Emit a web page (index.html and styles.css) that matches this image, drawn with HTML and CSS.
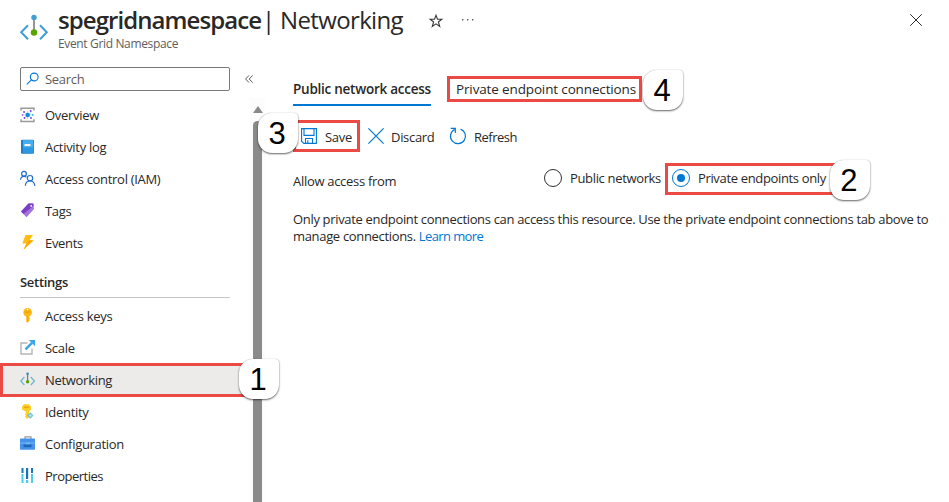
FILE: index.html
```html
<!DOCTYPE html>
<html lang="en">
<head>
<meta charset="utf-8">
<title>spegridnamespace | Networking</title>
<link rel="stylesheet" href="styles.css">
</head>
<body>
<div class="blade">
  <header class="header">
    <svg class="logo" width="28" height="28" viewBox="0 0 28 28" fill="none"><path d="M8 11.2 1.2 18.3 8 25.2M20 11.2l6.8 7.1-6.8 6.9" stroke="#3f9fd3" stroke-width="2"/><path d="M14 4v13" stroke="#8c8c8c" stroke-width="1.8"/><circle cx="14" cy="3.5" r="2.7" fill="#3f9fd3"/><circle cx="14" cy="18.5" r="3.2" fill="#57a300"/></svg>
    <div class="heading">
      <h1 class="title"><b class="name">spegridnamespace</b><span class="page">| Networking</span></h1>
      <div class="subtitle">Event Grid Namespace</div>
    </div>
    <svg class="star" width="14" height="14" viewBox="0 0 14 14" fill="none" stroke="#3b3a39" stroke-width="1.1"><path d="M7 1.2 8.5 5.2H12.8L9.4 8 10.7 12.5 7 9.9 3.3 12.5 4.6 8 1.2 5.2H5.5Z"/></svg>
    <svg class="more" width="12" height="4" viewBox="0 0 12 4" fill="#605e5c"><path d="M0 1h1.4v1.4H0zM5 1h1.4v1.4H5zM10 1h1.4v1.4H10z"/></svg>
    <svg class="close" width="12" height="12" viewBox="0 0 12 12" stroke="#323130" stroke-width="1"><path d="M.2.2l11.6 11.6M11.8.2.2 11.8"/></svg>
  </header>
  <div class="content">
    <aside class="sidebar">
      <div class="searchrow">
        <div class="search"><svg width="14" height="14" viewBox="0 0 14 14" fill="none" stroke="#0078d4" stroke-width="1.1"><circle cx="8.2" cy="5" r="3.9"/><path d="M5.4 7.8 .8 12.4"/></svg><span>Search</span></div>
        <svg class="collapse" width="8" height="8" viewBox="0 0 8 8" fill="none" stroke="#605e5c"><path d="M4 .4.6 4 4 7.6M7.6.4 4.2 4l3.4 3.6"/></svg>
      </div>
      <nav class="nav">
        <a class="item"><svg width="16" height="16" viewBox="0 0 16 16"><path d="M1 3.4V1.2h13v2.2M1 12.2v2.2h13v-2.2" fill="none" stroke="#999" stroke-width="1.5"/><path d="m4 5 7.5 6M11.5 5 4 11M2.5 8h11M7.7 4v8" stroke="#8fd3f2" stroke-width=".7"/><circle cx="7.7" cy="8" r="2.2" fill="#1688dc"/><g fill="#773adc"><circle cx="4" cy="5" r=".9"/><circle cx="10.7" cy="4" r=".9"/><circle cx="4.5" cy="11" r=".9"/><circle cx="11" cy="11" r=".9"/><circle cx="2.5" cy="8" r=".8"/></g><circle cx="12.8" cy="8" r=".9" fill="#32bedd"/></svg>Overview</a>
        <a class="item"><svg width="16" height="16" viewBox="0 0 16 16"><rect x="1" y="0.8" width="13" height="14" rx="1.2" fill="#1f7fc8"/><path d="M3 1.1h10.3v13H3z" fill="#46adee"/><path d="M3 8.3h10.3v5.8H3z" fill="#2c98e4"/><path d="M4.5 5.1h6v2h-6z" fill="#fff"/></svg>Activity log</a>
        <a class="item"><svg width="16" height="16" viewBox="0 0 16 16" fill="none" stroke="#1f6dd0" stroke-width="1.2"><circle cx="4" cy="2.7" r="2.4"/><path d="M.5 8.7c.3-2.5 1.8-3.3 3.5-3.3 1 0 1.7.2 2.4.7"/><circle cx="10" cy="7.2" r="2.7"/><path d="M5.3 14.8c.2-3.3 2.2-4.8 4.7-4.8s4.4 1.5 4.9 4.8"/></svg>Access control (IAM)</a>
        <a class="item"><svg width="16" height="16" viewBox="0 0 16 16"><path d="M8.5 .5h4.8l.7 5.5-7.5 8.2L1 8.5z" fill="#a575df"/><path d="M8.5 .5h4.8l.3 2.2L3.5 11 1 8.5z" fill="#7c3fc3"/><circle cx="11.2" cy="2.9" r=".9" fill="#fff"/></svg>Tags</a>
        <a class="item"><svg width="16" height="16" viewBox="0 0 16 16"><path d="M5.5 0H13L9.5 5.3h4L3.5 14.7 6.5 8.5H2.3z" fill="#ffbd14"/><path d="M9.5 5.3h4L3.5 14.7 6.5 8.5z" fill="#fca800"/></svg>Events</a>
        <h2 class="section">Settings</h2>
        <a class="item"><svg width="16" height="16" viewBox="0 0 16 16"><path d="M7.5 0a4.4 4.4 0 0 1 2 8.3l-.2 1.3.8 1-.8 1 .5 1-2.3 2.2-1.3-1.4V8.5A4.4 4.4 0 0 1 7.5 0z" fill="#fdb813"/><path d="M4.5 3.6h6v.9h-6z" fill="#e89112"/><path d="M7 8.8h.8v4.8H7z" fill="#eda01d"/><circle cx="7.5" cy="1.5" r=".8" fill="#fff"/></svg>Access keys</a>
        <a class="item"><svg width="16" height="16" viewBox="0 0 16 16" fill="none"><path d="M7.5 3H1v11h11V8.5" stroke="#b5b5b5" stroke-width="1.4"/><path d="m5.5 9.3 6.5-6.5" stroke="#3ca4ea" stroke-width="2.4"/><path d="M8.8 0H15v6.2z" fill="#3ca4ea"/></svg>Scale</a>
        <a class="item selected"><svg width="16" height="16" viewBox="0 0 16 16" fill="none"><path d="M4.4 5 .8 9l3.6 4M10.8 5l3.7 4-3.7 4" stroke="#6ab6d4" stroke-width="1.2"/><path d="M7.6 2v7" stroke="#668599" stroke-width="1.3"/><circle cx="7.6" cy="1.8" r="1.3" fill="#3588b5"/><circle cx="7.6" cy="9.8" r="1.7" fill="#57a300"/></svg>Networking<span class="callout c1">1</span></a>
        <a class="item"><svg width="16" height="16" viewBox="0 0 16 16"><path d="M4 .3h5l2 2.2v3L9 7.5v6l-2 1.4-2-2.4 1-1-1-1 .7-1v-2L2 5.5v-3z" fill="#ffce24"/><path d="M4 2.7h5v1H4z" fill="#d69c0c"/><path d="m10.3 8.3 3.2 3.2-3.2 3.2-3.2-3.2z" fill="#73bfdc"/><circle cx="10.3" cy="11.5" r="1.2" fill="#b3e6f6"/></svg>Identity</a>
        <a class="item"><svg width="16" height="16" viewBox="0 0 16 16"><path d="M5 3V.8h6V3" fill="none" stroke="#999" stroke-width="1.2"/><rect y="2.6" width="15" height="11.2" rx=".8" fill="#4591ec"/><path d="M0 6.5h15v1H0z" fill="#70b6f8"/><path d="M3.5 8.4h8v2.8h-8z" fill="#1e67b8"/><path d="M5.5 6.5h4.5v1.8H5.5z" fill="#6fb4f5"/></svg>Configuration</a>
        <a class="item"><svg width="16" height="16" viewBox="0 0 16 16"><path d="M1.5 0h2v5h-2zM6 0h2.2v11H6zm5 0h2v5h-2z" fill="#1674c5"/><path d="M1.5 6h2v9h-2zM6 12h2.2v3H6zm5-6h2v9h-2z" fill="#45cdf4"/></svg><span class="tight">Properties</span></a>
      </nav>
    </aside>
    <div class="scrollbar"><i class="up"></i><i class="thumb"></i></div>
    <main class="main">
      <div class="tabs">
        <div class="tab active">Public network access</div>
        <div class="tab marked">Private endpoint connections<span class="callout c4">4</span></div>
      </div>
      <div class="toolbar">
        <div class="save"><svg width="16" height="16" viewBox="0 0 16 16" fill="none" stroke="#0078d4" stroke-width="1.1"><path d="M.6.6h14.8v14.8H2.8L.6 13.2zM3 1v6.4h10V1M4.5 15v-4.5h7V15M6.8 12.2V15"/></svg><span class="command">Save</span><span class="callout c3">3</span></div>
        <svg class="discard" width="16" height="16" viewBox="0 0 16 16" stroke="#0078d4" stroke-width="1.2"><path d="m.4.4 15.2 15.2M15.6.4.4 15.6"/></svg><span class="command discard-text">Discard</span>
        <svg class="refresh" width="18" height="18" viewBox="0 0 18 18" fill="none" stroke="#0078d4" stroke-width="1.2"><path d="M11.6 2.1a7.5 7.5 0 1 1-6.1.4M1.7 1.4h4.6V6"/></svg><span class="command refresh-text">Refresh</span>
      </div>
      <div class="access">
        <div class="label">Allow access from</div>
        <div class="option"><i class="radio"></i><span>Public networks</span></div>
        <div class="option chosen"><i class="radio on"></i><span>Private endpoints only</span><span class="callout c2">2</span></div>
      </div>
      <p class="note">Only private endpoint connections can access this resource. Use the private endpoint connections tab above to<br>manage connections. <a class="link">Learn more</a></p>
    </main>
  </div>
</div>
</body>
</html>
```

FILE: styles.css
```css
* { box-sizing: border-box; }
body {
  margin: 0;
  overflow: hidden;
  background: #fff;
  color: #292827;
  font: 13px/18px "Open Sans", "Noto Sans", sans-serif;
  letter-spacing: -0.3px;
}
svg { display: block; flex: none; overflow: visible; }
.blade { width: 949px; height: 502px; overflow: hidden; }

.header { display: flex; height: 67px; padding: 0 27px 0 20px; }
.logo { margin-top: 14px; }
.heading { width: 346px; margin-left: 10px; }
.title { margin: 5px 0 0; display: flex; gap: 1px; font-size: 24px; line-height: 30px; font-weight: 400; white-space: nowrap; }
.name { flex: none; width: 203px; font-weight: 600; letter-spacing: -0.93px; }
.page { letter-spacing: -0.65px; }
.subtitle { margin-top: 1px; font-size: 12px; line-height: 16px; color: #605e5c; letter-spacing: -0.35px; }
.star { margin: 14px 0 0 25px; }
.more { margin: 18px 0 0 19px; }
.close { margin: 14px 0 0 auto; }

.content { display: flex; height: 435px; }
.sidebar { width: 250px; flex: none; }
.searchrow { display: flex; align-items: center; width: 254px; height: 24px; padding-left: 20px; }
.search { display: flex; flex: none; align-items: center; gap: 5px; width: 210px; height: 24px; padding-left: 5px; border: 1px solid #7b7977; border-radius: 2px; color: #605e5c; }
.collapse { margin-left: 15px; }
.nav { padding-top: 8px; }
.item { position: relative; display: flex; align-items: center; gap: 9px; height: 32px; padding-left: 20px; }
.tight { letter-spacing: -0.5px; }
.section { margin: 11px 20px 2px 20px; height: 28px; padding-top: 3px; border-bottom: 1px solid #c8c6c4; font-size: 13px; line-height: 18px; font-weight: 600; }
.selected { height: 34px; margin: -1px -5px -1px 0; padding-left: 17px; border: 3px solid #ea4a43; background: #edebe9; }

.scrollbar { display: flex; flex-direction: column; align-items: center; width: 15px; flex: none; margin-top: 31px; background: #fcfcfc; }
.up { margin-top: 8px; border: 5px solid transparent; border-top: 0; border-bottom: 7px solid #8a8a8a; }
.thumb { width: 9px; height: 400px; flex: none; margin-top: 8px; background: #8a8a8a; border-radius: 5px 5px 0 0; }

.main { width: 684px; padding-left: 28px; }
.tabs { display: flex; height: 39px; padding-top: 9px; font-size: 13.5px; letter-spacing: -0.14px; }
.active { width: 138px; height: 30px; padding-top: 4px; border-bottom: 2px solid #0078d4; font-weight: 600; letter-spacing: -0.25px; white-space: nowrap; }
.marked { position: relative; width: 195px; height: 26px; margin-left: 16px; padding-left: 6px; border: 3px solid #ea4a43; line-height: 20px; white-space: nowrap; }
.toolbar { display: flex; align-items: center; height: 32px; margin-top: 14px; }
.save { position: relative; display: flex; align-items: center; gap: 8px; width: 67px; height: 32px; padding-left: 5px; border: 3px solid #ea4a43; }
.command { padding-top: 2px; }
.discard { margin-left: 8px; }
.discard-text { width: 43px; margin-left: 7px; }
.refresh { margin-left: 15px; }
.refresh-text { margin-left: 7px; letter-spacing: -0.5px; }
.access { display: flex; height: 33px; margin-top: 11px; white-space: nowrap; }
.label { width: 251px; padding-top: 9px; }
.option { display: flex; align-items: center; gap: 8px; height: 30px; }
.option > span { margin-top: -1px; letter-spacing: -0.34px; }
.radio { width: 18px; height: 18px; flex: none; border: 1px solid #323130; border-radius: 50%; }
.radio.on { padding: 4px; border-color: #0078d4; }
.radio.on::before { content: ""; display: block; width: 8px; height: 8px; border-radius: 50%; background: #0078d4; }
.chosen { position: relative; width: 170px; height: 32px; margin-left: 4px; padding: 0 0 2px 4px; border: 3px solid #ea4a43; border-right: 0; }
.note { margin: 15px 0 0; line-height: 17px; letter-spacing: -0.33px; white-space: nowrap; }
.link { color: #0078d4; letter-spacing: -0.6px; }

.callout {
  position: absolute;
  width: 40px;
  height: 40px;
  border-radius: 14px 4px 14px 14px;
  background: #fff;
  box-shadow: 0 1px 2px rgba(0,0,0,.6), 0 0 1px rgba(0,0,0,.25);
  color: #000;
  font: 31px/41px "Liberation Sans", sans-serif;
  text-align: center;
  text-indent: -2px;
}
.selected .callout, .marked .callout, .save .callout, .option > .callout { letter-spacing: 0; }
.c1 { left: 236px; top: -7px; }
.c2 { left: 162px; top: -6px; }
.option > .c2 { margin: 0; }
.c3 { left: -38px; top: -10px; }
.c4 { left: 193px; top: -9px; }
```
